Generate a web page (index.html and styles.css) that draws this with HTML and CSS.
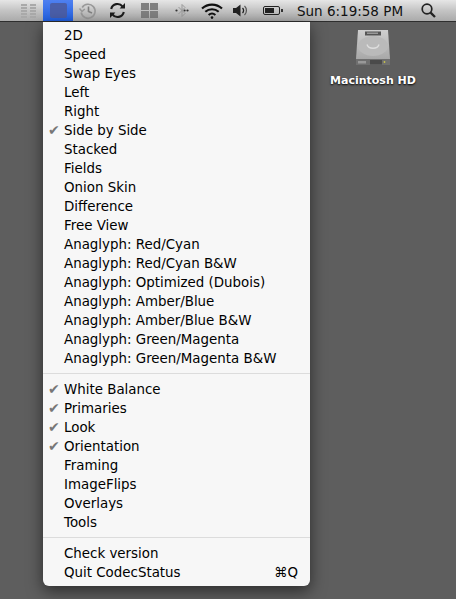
FILE: index.html
```html
<!DOCTYPE html>
<html lang="en">

<head>
    <meta charset="UTF-8">
    <title>CodecStatus menu</title>
    <link rel="stylesheet" href="styles.css">
</head>

<body>
    <div class="menubar">
        <div class="slot slotGrid">
            <svg width="16" height="14" viewBox="0 0 16 14" fill="#a9a9a9">
                <rect x="0" y="0" width="6" height="2" /><rect x="0" y="3" width="6" height="2" />
                <rect x="0" y="6" width="6" height="2" /><rect x="0" y="9" width="6" height="2" />
                <rect x="0" y="12" width="6" height="2" /><rect x="9" y="0" width="6" height="2" />
                <rect x="9" y="3" width="6" height="2" /><rect x="9" y="6" width="6" height="2" />
                <rect x="9" y="9" width="6" height="2" /><rect x="9" y="12" width="6" height="2" />
            </svg>
        </div>
        <div class="slot slotActive"><div class="activeSquare"></div></div>
        <div class="slot slotHistory">
            <svg width="18" height="18" viewBox="0 0 18 18" fill="none" stroke="#999" stroke-width="1.6">
                <path d="M3.2 5.5A7 7 0 1 1 2.2 10.5" />
                <path d="M0.5 6.5L3 9.5L5.8 7" stroke-width="1.4" />
                <path d="M9.5 4.5V9.5L13 11" stroke="#808080" />
            </svg>
        </div>
        <div class="slot slotSync">
            <svg width="17" height="17" viewBox="0 0 17 17" fill="none" stroke="#1c1c1c" stroke-width="2.1">
                <path d="M2.2 7A6.4 6.4 0 0 1 13.6 4.6" />
                <path d="M14.8 10A6.4 6.4 0 0 1 3.4 12.4" />
                <path d="M16 1V6.5H10.6Z" fill="#1c1c1c" stroke="none" />
                <path d="M1 16V10.5H6.4Z" fill="#1c1c1c" stroke="none" />
            </svg>
        </div>
        <div class="slot slotWindows">
            <div class="windows"><span></span><span></span><span></span><span></span></div>
        </div>
        <div class="slot slotBt">
            <svg width="14" height="15" viewBox="0 0 14 15" fill="none" stroke="#9a9a9a" stroke-width="1">
                <path d="M3.5 4L10 10.5L7 13.5V1.5L10 4.5L3.5 11" />
                <circle cx="1.5" cy="7.5" r="1.1" fill="#333" stroke="none" />
                <circle cx="12.5" cy="7.5" r="1.1" fill="#333" stroke="none" />
                <circle cx="9.6" cy="7.5" r="1.1" fill="#333" stroke="none" />
            </svg>
        </div>
        <div class="slot slotWifi">
            <svg width="22" height="16" viewBox="0 0 22 16" fill="none" stroke="#111" stroke-width="2.1">
                <path d="M1 5.6A14.5 14.5 0 0 1 21 5.6" />
                <path d="M4.3 8.8A10 10 0 0 1 17.7 8.8" />
                <path d="M7.6 12A5.2 5.2 0 0 1 14.4 12" />
                <circle cx="11" cy="14.6" r="1.3" fill="#111" stroke="none" />
            </svg>
        </div>
        <div class="slot slotVolume">
            <svg width="15" height="13" viewBox="0 0 15 13" fill="#222">
                <path d="M0 4H3L7.5 0.5V12.5L3 9H0Z" />
                <path d="M9.5 4A3.4 3.4 0 0 1 9.5 9" fill="none" stroke="#222" stroke-width="1.3" />
                <path d="M11.5 2A6.2 6.2 0 0 1 11.5 11" fill="none" stroke="#555" stroke-width="1.2" />
            </svg>
        </div>
        <div class="slot slotBattery">
            <div class="battery"><div class="batteryFill"></div></div>
            <div class="batteryTip"></div>
        </div>
        <div class="slot slotClock">Sun 6:19:58 PM</div>
        <div class="slot slotSearch">
            <svg width="15" height="15" viewBox="0 0 15 15" fill="none" stroke="#222" stroke-width="1.7">
                <circle cx="6" cy="6" r="4.8" />
                <path d="M9.6 9.6L14 14" stroke-width="2.3" />
            </svg>
        </div>
    </div>

    <div class="desktopIcon">
        <svg width="36" height="37" viewBox="0 0 36 37">
            <defs>
                <linearGradient id="hdTop" x1="0" y1="0" x2="0" y2="1">
                    <stop offset="0" stop-color="#cfcfcf" />
                    <stop offset="1" stop-color="#a8a8a8" />
                </linearGradient>
            </defs>
            <path d="M3 1H33L35 30H1Z" fill="url(#hdTop)" />
            <rect x="10" y="2.5" width="16" height="4" fill="#555" />
            <rect x="12" y="3.5" width="11" height="1.5" fill="#999" />
            <ellipse cx="18" cy="17" rx="15" ry="10" fill="#bababa" />
            <path d="M12 15.5C13.5 20.5 22.5 20.5 24 15.5" fill="none" stroke="#dedede" stroke-width="1.4" />
            <path d="M1 30H35V36H1Z" fill="#6f6f6f" />
            <rect x="15" y="31" width="12" height="4.5" fill="#4a4a4a" />
            <rect x="3" y="32" width="8" height="2.5" fill="#999" />
            <circle cx="29.5" cy="33" r="0.9" fill="#c9c24a" />
        </svg>
        <div class="desktopLabel">Macintosh HD</div>
    </div>

    <div class="menu">
        <div class="menuItem">2D</div>
        <div class="menuItem">Speed</div>
        <div class="menuItem">Swap Eyes</div>
        <div class="menuItem">Left</div>
        <div class="menuItem">Right</div>
        <div class="menuItem checked">Side by Side</div>
        <div class="menuItem">Stacked</div>
        <div class="menuItem">Fields</div>
        <div class="menuItem">Onion Skin</div>
        <div class="menuItem">Difference</div>
        <div class="menuItem">Free View</div>
        <div class="menuItem">Anaglyph: Red/Cyan</div>
        <div class="menuItem">Anaglyph: Red/Cyan B&amp;W</div>
        <div class="menuItem">Anaglyph: Optimized (Dubois)</div>
        <div class="menuItem">Anaglyph: Amber/Blue</div>
        <div class="menuItem">Anaglyph: Amber/Blue B&amp;W</div>
        <div class="menuItem">Anaglyph: Green/Magenta</div>
        <div class="menuItem">Anaglyph: Green/Magenta B&amp;W</div>
        <div class="menuSep"></div>
        <div class="menuItem checked">White Balance</div>
        <div class="menuItem checked">Primaries</div>
        <div class="menuItem checked">Look</div>
        <div class="menuItem checked">Orientation</div>
        <div class="menuItem">Framing</div>
        <div class="menuItem">ImageFlips</div>
        <div class="menuItem">Overlays</div>
        <div class="menuItem">Tools</div>
        <div class="menuSep"></div>
        <div class="menuItem">Check version</div>
        <div class="menuItem">Quit CodecStatus<span class="shortcut">⌘Q</span></div>
    </div>
</body>

</html>
```

FILE: styles.css
```css
html,
body {
    height: 100%;
    margin: 0;
    padding: 0;
}

body {
    position: relative;
    overflow: hidden;
    background: #5e5e5e;
    font-family: "DejaVu Sans", "Liberation Sans", sans-serif;
    color: #000;
}

.menubar {
    display: flex;
    height: 21px;
    padding-left: 14px;
    border-bottom: 1px solid #2e2e2e;
    background: linear-gradient(#e6e6e6, #c4c4c4 50%, #aaa);
}

.slot {
    display: flex;
    justify-content: center;
    align-items: center;
    flex: none;
}

.slotGrid { width: 29px; }
.slotActive { width: 30px; background: linear-gradient(#4f80f0, #2160e0); }
.slotHistory { width: 29px; }
.slotSync { width: 31px; }
.slotWindows { width: 32px; }
.slotBt { width: 33px; }
.slotWifi { width: 27px; }
.slotVolume { width: 30px; }
.slotBattery { width: 36px; }
.slotClock { width: 118px; font-size: 13.5px; color: #111; white-space: nowrap; }
.slotSearch { width: 38px; }

.activeSquare {
    width: 17px;
    height: 15px;
    border-radius: 2px;
    background: #4a5ea8;
}

.windows {
    display: grid;
    grid-template-columns: 8px 8px;
    grid-template-rows: 7px 7px;
    gap: 1px;
}

.windows span {
    background: #7f7f7f;
}

.battery {
    box-sizing: border-box;
    width: 17px;
    height: 9px;
    padding: 1px;
    border: 1px solid #222;
    border-radius: 2px;
}

.batteryFill {
    width: 9px;
    height: 5px;
    background: #222;
}

.batteryTip {
    width: 2px;
    height: 3px;
    margin-left: 1px;
    background: #333;
}

.desktopIcon {
    position: absolute;
    left: 320px;
    top: 29px;
    width: 106px;
    display: flex;
    flex-direction: column;
    align-items: center;
}

.desktopLabel {
    margin-top: 7px;
    font-size: 11px;
    font-weight: bold;
    line-height: 15px;
    color: #fff;
    text-shadow: 0 1px 2px #000;
}

.menu {
    position: absolute;
    left: 43px;
    top: 22px;
    width: 267px;
    box-sizing: border-box;
    padding: 4px 0;
    border-radius: 0 0 6px 6px;
    background: #f7f7f7;
    box-shadow: 0 5px 16px rgba(0, 0, 0, 0.55);
    font-size: 13.4px;
}

.menuItem {
    position: relative;
    display: flex;
    justify-content: space-between;
    height: 19px;
    padding: 0 12px 0 21px;
    line-height: 19px;
    white-space: nowrap;
}

.checked::before {
    content: "✔";
    position: absolute;
    left: 5px;
    top: 0;
    font-size: 14px;
    color: #777;
}

.menuSep {
    height: 1px;
    margin: 5px 0 6px;
    background: #dcdcdc;
}
```
